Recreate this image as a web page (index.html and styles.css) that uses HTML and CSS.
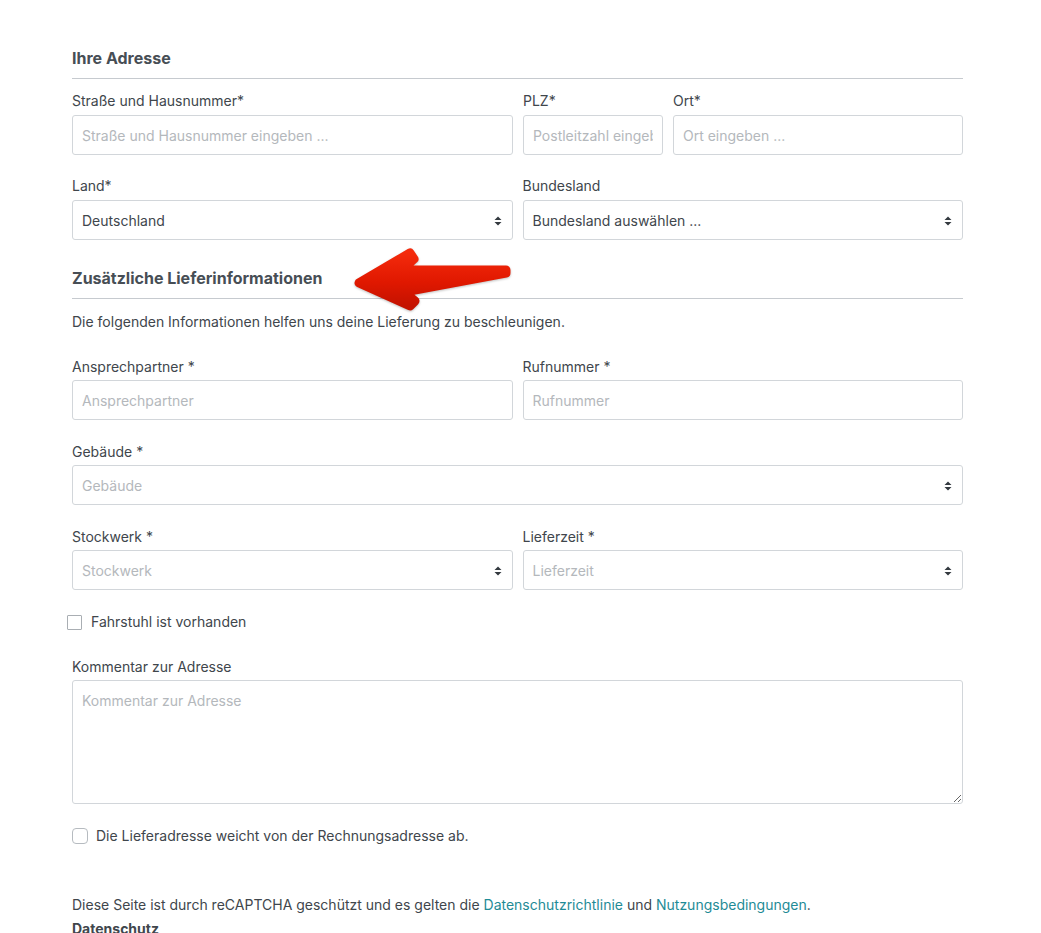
FILE: index.html
```html
<!DOCTYPE html>
<html lang="de">
<head>
<meta charset="utf-8">
<title>Adresse</title>
<link rel="stylesheet" href="styles.css">
</head>
<body>
<div class="screen">
  <main class="page">
    <section class="section">
      <h2 class="section-title">Ihre Adresse</h2>
      <div class="row row-addr">
        <div class="field">
          <label class="label">Straße und Hausnummer*</label>
          <input class="control" type="text" placeholder="Straße und Hausnummer eingeben ...">
        </div>
        <div class="field">
          <label class="label">PLZ*</label>
          <input class="control" type="text" placeholder="Postleitzahl eingeben ...">
        </div>
        <div class="field">
          <label class="label">Ort*</label>
          <input class="control" type="text" placeholder="Ort eingeben ...">
        </div>
      </div>
      <div class="row row-half">
        <div class="field">
          <label class="label">Land*</label>
          <div class="select">
            <span class="select-value">Deutschland</span>
            <svg class="caret" width="8" height="12" viewBox="0 0 8 12"><path d="M4 1.5 L7.5 5 H0.5 Z M4 10.5 L7.5 7 H0.5 Z" fill="#343a40"/></svg>
          </div>
        </div>
        <div class="field">
          <label class="label">Bundesland</label>
          <div class="select">
            <span class="select-value">Bundesland auswählen ...</span>
            <svg class="caret" width="8" height="12" viewBox="0 0 8 12"><path d="M4 1.5 L7.5 5 H0.5 Z M4 10.5 L7.5 7 H0.5 Z" fill="#343a40"/></svg>
          </div>
        </div>
      </div>
    </section>

    <section class="section section-delivery">
      <h2 class="section-title">Zusätzliche Lieferinformationen</h2>
      <p class="hint">Die folgenden Informationen helfen uns deine Lieferung zu beschleunigen.</p>
      <div class="row row-half tight">
        <div class="field">
          <label class="label">Ansprechpartner *</label>
          <input class="control" type="text" placeholder="Ansprechpartner">
        </div>
        <div class="field">
          <label class="label">Rufnummer *</label>
          <input class="control" type="text" placeholder="Rufnummer">
        </div>
      </div>
      <div class="row tight">
        <div class="field">
          <label class="label">Gebäude *</label>
          <div class="select">
            <span class="select-value placeholder">Gebäude</span>
            <svg class="caret" width="8" height="12" viewBox="0 0 8 12"><path d="M4 1.5 L7.5 5 H0.5 Z M4 10.5 L7.5 7 H0.5 Z" fill="#343a40"/></svg>
          </div>
        </div>
      </div>
      <div class="row row-half tight">
        <div class="field">
          <label class="label">Stockwerk *</label>
          <div class="select">
            <span class="select-value placeholder">Stockwerk</span>
            <svg class="caret" width="8" height="12" viewBox="0 0 8 12"><path d="M4 1.5 L7.5 5 H0.5 Z M4 10.5 L7.5 7 H0.5 Z" fill="#343a40"/></svg>
          </div>
        </div>
        <div class="field">
          <label class="label">Lieferzeit *</label>
          <div class="select">
            <span class="select-value placeholder">Lieferzeit</span>
            <svg class="caret" width="8" height="12" viewBox="0 0 8 12"><path d="M4 1.5 L7.5 5 H0.5 Z M4 10.5 L7.5 7 H0.5 Z" fill="#343a40"/></svg>
          </div>
        </div>
      </div>
      <label class="check check-lift">
        <span class="box box-square"></span>
        <span class="check-text">Fahrstuhl ist vorhanden</span>
      </label>
      <div class="field field-comment">
        <label class="label">Kommentar zur Adresse</label>
        <textarea class="control textarea" placeholder="Kommentar zur Adresse"></textarea>
      </div>
      <label class="check check-alt">
        <span class="box box-round"></span>
        <span class="check-text">Die Lieferadresse weicht von der Rechnungsadresse ab.</span>
      </label>
    </section>

    <p class="legal">Diese Seite ist durch reCAPTCHA geschützt und es gelten die <a class="link" href="#">Datenschutzrichtlinie</a> und <a class="link" href="#">Nutzungsbedingungen</a>.</p>
    <h3 class="legal-title">Datenschutz</h3>
  </main>

  <svg class="annot-arrow" width="175" height="80" viewBox="0 0 175 80">
    <defs>
      <linearGradient id="ag" x1="0" y1="0" x2="0" y2="1">
        <stop offset="0" stop-color="#f42a0c"/>
        <stop offset="0.55" stop-color="#e01800"/>
        <stop offset="1" stop-color="#c41200"/>
      </linearGradient>
    </defs>
    <polygon points="14,43 65,13 69,19 57,30 161,30 161,33 59,52 70,61 65,66" fill="url(#ag)" stroke="url(#ag)" stroke-width="9" stroke-linejoin="round"/>
  </svg>
</div>
</body>
</html>
```

FILE: styles.css
```css
* { box-sizing: border-box; }

html, body {
  margin: 0;
  padding: 0;
  background: #ffffff;
}

body {
  font-family: Inter, "Noto Sans", "Liberation Sans", sans-serif;
  font-size: 14px;
  color: #40464c;
}

.screen {
  position: relative;
  width: 1041px;
  height: 933px;
  overflow: hidden;
}

.page {
  width: 891px;
  margin-left: 72px;
  padding-top: 47px;
}

.section-title {
  margin: 0;
  font-size: 16px;
  line-height: 22px;
  font-weight: 700;
  color: #474e55;
  padding-bottom: 9px;
  border-bottom: 1px solid #c6cacf;
}

.section .section-title + .row { margin-top: 12px; }

.row {
  display: grid;
  grid-template-columns: 1fr;
  column-gap: 10px;
  margin-bottom: 21px;
}

.row-addr { grid-template-columns: 441px 140px 1fr; }
.row-half { grid-template-columns: 1fr 1fr; }

.row.tight { margin-bottom: 22px; }
.row.tight .label { margin-bottom: 3px; }

.section-delivery { margin-top: 27px; }

.hint {
  margin: 13px 0 25px;
  font-size: 14px;
  line-height: 20px;
  color: #40464c;
}

.label {
  display: block;
  font-size: 14px;
  line-height: 20px;
  margin-bottom: 4px;
  color: #40464c;
}

.control {
  display: block;
  width: 100%;
  height: 40px;
  margin: 0;
  padding: 0 9px;
  border: 1px solid #d2d6da;
  border-radius: 3px;
  font-family: inherit;
  font-size: 14px;
  color: #40464c;
  background: #fff;
  outline: none;
}

.control::placeholder { color: #b4b8bc; }

.select {
  position: relative;
  display: flex;
  align-items: center;
  height: 40px;
  padding: 0 30px 0 9px;
  border: 1px solid #d2d6da;
  border-radius: 3px;
  background: #fff;
}

.select-value {
  font-size: 14px;
  color: #40464c;
  white-space: nowrap;
  overflow: hidden;
}

.select-value.placeholder { color: #b4b8bc; }

.caret {
  position: absolute;
  right: 10px;
  top: 14px;
}

.check {
  display: flex;
  align-items: center;
  height: 20px;
}

.check-lift {
  margin: 21px 0 0 -5px;
}

.check-alt {
  margin-top: 22px;
}

.box {
  display: block;
  flex: none;
  background: #fff;
}

.box-square {
  width: 15px;
  height: 15px;
  border: 1px solid #a9aeb3;
  border-radius: 1px;
  margin-right: 9px;
}

.box-round {
  width: 16px;
  height: 16px;
  border: 1px solid #b6bbc0;
  border-radius: 4px;
  margin-right: 8px;
}

.check-text {
  font-size: 14px;
  line-height: 20px;
  color: #40464c;
}

.field-comment { margin-top: 25px; }
.field-comment .label { margin-bottom: 3px; }

.textarea {
  height: 124px;
  padding: 10px 9px;
  resize: vertical;
  line-height: 20px;
}

.legal {
  margin: 49px 0 0;
  font-size: 14px;
  line-height: 20px;
  color: #40464c;
}

.link {
  color: #1f8b96;
  text-decoration: none;
}

.legal-title {
  margin: 4px 0 0;
  font-size: 14px;
  line-height: 20px;
  font-weight: 700;
  color: #40464c;
}

.annot-arrow {
  position: absolute;
  left: 345px;
  top: 240px;
  filter: drop-shadow(0 1px 1px rgba(0, 0, 0, 0.25));
}
```
